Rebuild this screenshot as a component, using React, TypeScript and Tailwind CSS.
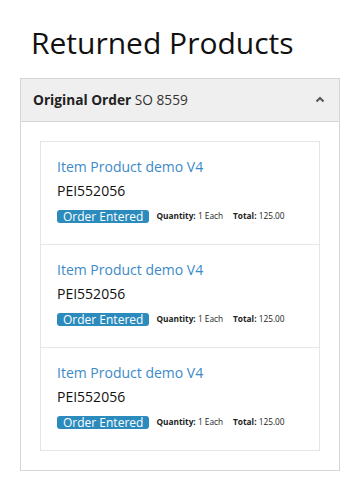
import React from 'react';

const items = [1, 2, 3].map((n) => ({
  id: n,
  name: 'Item Product demo V4',
  code: 'PEI552056',
  status: 'Order Entered',
  quantity: '1 Each',
  total: '125.00',
}));

export default function App() {
  return (
    <div className="min-h-[502px] bg-white px-5 font-['Open_Sans',sans-serif] text-[#222]">
      <h1 className="pl-[11px] pt-[23px] pb-[16px] text-[30px] leading-[39px] text-[#111]">
        Returned Products
      </h1>

      <div className="border border-[#d6d6d6]">
        {/* Panel header */}
        <div className="flex h-[43px] items-center justify-between border-b border-[#d6d6d6] bg-[#efefef] px-3">
          <div className="text-[13.7px] text-[#333]">
            <span className="font-bold text-[#222]">Original Order</span> SO 8559
          </div>
          <svg width="12" height="8" viewBox="0 0 12 8" className="mr-[1px] mb-[2px]">
            <polyline points="2.5,6.5 6,3 9.5,6.5" fill="none" stroke="#5a5a5a" strokeWidth="2.2" />
          </svg>
        </div>

        {/* Panel body */}
        <div className="p-[19px]">
          <div className="border border-[#e6e6e6]">
            {items.map((item, i) => (
              <div
                key={item.id}
                className={`px-4 pt-[15px] pb-[21px] ${i > 0 ? 'border-t border-[#e6e6e6]' : ''}`}
              >
                <div className="text-[14px] leading-[20px] text-[#3d8ac8]">{item.name}</div>
                <div className="mt-[4px] text-[14px] leading-[20px] text-[#111]">{item.code}</div>
                <div className="mt-[9px] flex items-center">
                  <span className="rounded-[3px] bg-[#2b8bbd] px-[6px] text-[12px] leading-[13px] text-white">
                    {item.status}
                  </span>
                  <span className="ml-[7px] text-[8.3px] text-[#222]">
                    <span className="font-bold">Quantity:</span> {item.quantity}
                  </span>
                  <span className="ml-[10px] text-[8.3px] text-[#222]">
                    <span className="font-bold">Total:</span> {item.total}
                  </span>
                </div>
              </div>
            ))}
          </div>
        </div>
      </div>
    </div>
  );
}
